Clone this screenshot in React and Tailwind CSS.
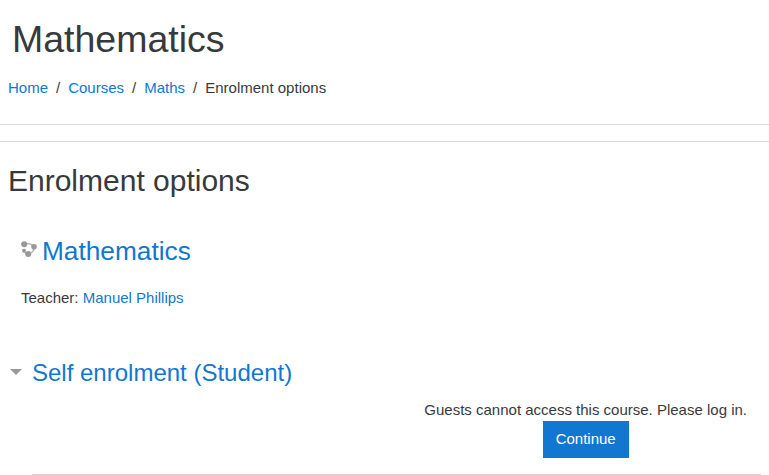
import React from "react";

function CourseIcon() {
  return (
    <svg width="16" height="16" viewBox="0 0 16 16" className="shrink-0" fill="#999">
      <path d="M3 3.3 Q9 1 13 5.7 Q13.5 11.5 7 13.3 Q3.5 12.5 3 9.7" stroke="#bbb" strokeWidth="1.4" fill="none" />
      <circle cx="3.2" cy="3.3" r="3" />
      <circle cx="13" cy="5.7" r="2.8" />
      <circle cx="7.2" cy="13" r="3" />
      <circle cx="3" cy="9.7" r="2" />
    </svg>
  );
}

export default function App() {
  return (
    <div className="w-[769px] h-[475px] overflow-hidden bg-white text-[15px] leading-[22.5px] text-[#373a3c] font-['Liberation_Sans',sans-serif]">
      <header className="h-[125px] border-b border-[#d9d9d9]">
        <h1 className="pl-3 pt-[17px] text-[37.5px] leading-[45px] text-[#373a3c]">Mathematics</h1>
        <nav className="mt-[15px] pl-2 flex items-center">
          <a className="text-[#1177d1]">Home</a>
          <span className="px-2">/</span>
          <a className="text-[#1177d1]">Courses</a>
          <span className="px-2">/</span>
          <a className="text-[#1177d1]">Maths</a>
          <span className="px-2">/</span>
          <span>Enrolment options</span>
        </nav>
      </header>
      <main className="mt-4 border-t border-[#d9d9d9] px-2">
        <h2 className="mt-[21px] text-[30px] leading-[36px] text-[#373a3c]">Enrolment options</h2>
        <div className="mt-[37px] pl-3">
          <div className="flex items-start">
            <div className="mt-[5px] ml-[1px] mr-[5px]"><CourseIcon /></div>
            <h3 className="text-[26.25px] leading-[31px] text-[#1177d1]">Mathematics</h3>
          </div>
          <p className="mt-[20px] pl-[1px]">Teacher: <a className="text-[#1177d1]">Manuel Phillips</a></p>
        </div>
        <div className="mt-[48px] flex items-center">
          <svg width="14" height="8" viewBox="0 0 14 8" className="ml-[1px] mr-[9px] shrink-0"><path d="M1 1 H13 L7 7 Z" fill="#999" /></svg>
          <h3 className="text-[24px] leading-[29px] text-[#1177d1]">Self enrolment (Student)</h3>
        </div>
        <div className="ml-6 mt-[12px] border-b border-[#d9d9d9] h-[76px] flex flex-col items-end">
          <div className="mr-[14px] flex flex-col items-center">
            <p>Guests cannot access this course. Please log in.</p>
            <button className="h-[37px] px-[13px] bg-[#1177d1] text-white">Continue</button>
          </div>
        </div>
      </main>
    </div>
  );
}
